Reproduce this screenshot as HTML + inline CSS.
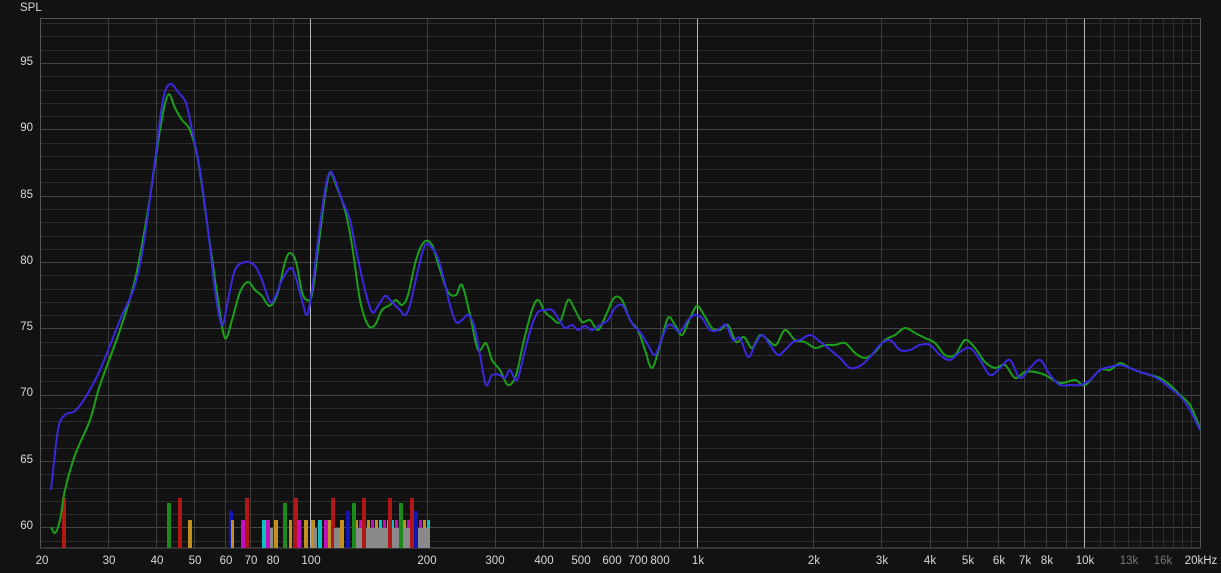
<!DOCTYPE html>
<html><head><meta charset="utf-8"><style>
html,body{margin:0;padding:0;background:#121212;}
body{width:1221px;height:573px;overflow:hidden;position:relative;font-family:"Liberation Sans",sans-serif;color:#d8d8d8;font-size:11.5px;}
.yl{position:absolute;right:1188px;text-align:right;width:30px;}
.xl{position:absolute;top:555px;transform:translateX(-50%);}
svg{position:absolute;left:0;top:0;}
</style></head><body>
<svg id="s" width="1221" height="573">
<g id="grid"></g>
<g id="bars"></g>
<path id="gp" fill="none" stroke="#19a019" stroke-width="2"/>
<path id="bp" fill="none" stroke="#3a28e0" stroke-width="2"/>
</svg>
<div style="position:absolute;left:20px;top:2px;">SPL</div>
<div class="yl" style="top:56px">95</div>
<div class="yl" style="top:122px">90</div>
<div class="yl" style="top:189px">85</div>
<div class="yl" style="top:255px">80</div>
<div class="yl" style="top:321px">75</div>
<div class="yl" style="top:387px">70</div>
<div class="yl" style="top:454px">65</div>
<div class="yl" style="top:520px">60</div>
<div class="xl" style="left:42px">20</div>
<div class="xl" style="left:109px">30</div>
<div class="xl" style="left:157px">40</div>
<div class="xl" style="left:195px">50</div>
<div class="xl" style="left:226px">60</div>
<div class="xl" style="left:251px">70</div>
<div class="xl" style="left:273px">80</div>
<div class="xl" style="left:311px">100</div>
<div class="xl" style="left:427px">200</div>
<div class="xl" style="left:495px">300</div>
<div class="xl" style="left:544px">400</div>
<div class="xl" style="left:581px">500</div>
<div class="xl" style="left:612px">600</div>
<div class="xl" style="left:638px">700</div>
<div class="xl" style="left:660px">800</div>
<div class="xl" style="left:698px">1k</div>
<div class="xl" style="left:814px">2k</div>
<div class="xl" style="left:882px">3k</div>
<div class="xl" style="left:930px">4k</div>
<div class="xl" style="left:968px">5k</div>
<div class="xl" style="left:999px">6k</div>
<div class="xl" style="left:1025px">7k</div>
<div class="xl" style="left:1047px">8k</div>
<div class="xl" style="left:1085px">10k</div>
<div class="xl" style="left:1129px;color:#777">13k</div>
<div class="xl" style="left:1163px;color:#777">16k</div>
<div class="xl" style="left:1201px">20kHz</div>
<script>
var NS="http://www.w3.org/2000/svg",L=40,R=1201,T=18,B=548;
function ln(g,x1,y1,x2,y2,c){var e=document.createElementNS(NS,"line");e.setAttribute("x1",x1);e.setAttribute("y1",y1);e.setAttribute("x2",x2);e.setAttribute("y2",y2);e.setAttribute("stroke",c);e.setAttribute("stroke-width",1);g.appendChild(e);}
var g=document.getElementById("grid");
function fx(f){return 40+386.7*Math.log10(f/20);}
for(var d=58;d<=98;d++){var y=Math.round(63+(95-d)*13.27)+0.5;if(y<T||y>B)continue;ln(g,L,y,R,y,d%5==0?"#444":"#2c2c2c");}
var fs=[];for(var f=20;f<=100;f+=10)fs.push(f);for(f=200;f<=1000;f+=100)fs.push(f);for(f=2000;f<=10000;f+=1000)fs.push(f);for(f=11000;f<=20000;f+=1000)fs.push(f);
fs.forEach(function(f){var x=Math.round(fx(f))+0.5;var c=(f==100||f==1000||f==10000)?"#b8b8b8":(f>10000?"#2e2e2e":"#3c3c3c");ln(g,x,T,x,B,c);});
var r=document.createElementNS(NS,"rect");r.setAttribute("x",40.5);r.setAttribute("y",18.5);r.setAttribute("width",1160);r.setAttribute("height",529.5);r.setAttribute("fill","none");r.setAttribute("stroke","#555");g.appendChild(r);
var bg=document.getElementById("bars");
function bar(x,w,top,c){var e=document.createElementNS(NS,"rect");e.setAttribute("x",x);e.setAttribute("y",top);e.setAttribute("width",w);e.setAttribute("height",B-top);e.setAttribute("fill",c);bg.appendChild(e);}
var RD="#b01818",GR="#1a8a1a",GD="#c09020",BL="#1414b0",MG="#c010c0",CY="#10c0c0",GY="#8a8a8a";
bar(355,73,528,GY);
var cols=[GD,MG,CY,GD,MG,GD,CY,MG,GD,CY,MG,GD];
for(var x=355,i=0;x<428;x+=4,i++){bar(x,3,520,cols[i%cols.length]);bar(x,3,528,GY);}
[[62,4,498,RD],[167,4,503,GR],[178,4,498,RD],[188,4,520,GD],[229,4,511,BL],[231,3,520,GD],[241,4,520,MG],[245,4,498,RD],[262,4,520,CY],[266,4,520,MG],[270,3,528,GY],[274,4,520,GD],[283,4,503,GR],[289,3,520,GD],[294,4,498,RD],[297,4,520,MG],[304,4,520,GD],[311,4,520,GD],[314,3,528,GY],[318,4,520,CY],[324,4,520,MG],[328,3,520,GD],[331,4,498,RD],[334,6,528,GY],[340,4,520,GD],[346,4,511,BL],[352,4,503,GR],[362,4,498,RD],[388,4,498,RD],[399,4,503,GR],[410,4,498,RD],[414,4,511,BL]].forEach(function(b){bar(b[0],b[1],b[2],b[3]);});
function smooth(s){var p=s.trim().split(/\s+/).map(function(t){return t.split(",").map(Number);});var d="M"+p[0][0]+","+p[0][1];for(var i=0;i<p.length-1;i++){var p0=p[i-1]||p[i],p1=p[i],p2=p[i+1],p3=p[i+2]||p2;var c1x=p1[0]+(p2[0]-p0[0])/6,c1y=p1[1]+(p2[1]-p0[1])/6,c2x=p2[0]-(p3[0]-p1[0])/6,c2y=p2[1]-(p3[1]-p1[1])/6;d+=" C"+c1x.toFixed(1)+","+c1y.toFixed(1)+" "+c2x.toFixed(1)+","+c2y.toFixed(1)+" "+p2[0]+","+p2[1];}return d;}
var G="51,527 55,533 60,520 65,490 75,455 90,420 100,385 120,330 135,280 148,210 160,130 168,95 175,108 182,120 190,130 198,160 208,230 218,300 225,338 232,320 240,292 248,282 255,290 262,296 270,306 278,292 285,262 290,253 296,262 302,292 307,300 312,295 318,250 325,195 330,173 336,185 345,210 352,245 360,300 368,325 375,325 382,310 390,305 396,300 402,305 408,295 416,260 424,242 432,245 440,270 448,292 456,295 462,285 470,315 478,350 486,343 492,360 500,370 508,385 516,375 524,340 532,310 538,300 545,312 552,318 560,322 568,300 575,310 582,322 590,320 598,330 606,315 614,298 622,300 630,320 638,330 645,350 652,368 660,345 668,318 675,325 682,335 690,318 697,306 704,315 712,328 720,330 728,325 736,342 744,337 752,348 760,335 768,340 776,345 785,330 795,340 805,342 815,348 825,345 835,345 845,343 855,353 865,358 875,352 885,340 895,335 905,328 915,333 925,338 935,343 945,355 955,355 965,340 975,348 985,362 995,368 1005,365 1015,378 1025,372 1035,372 1045,375 1060,383 1075,380 1085,385 1100,370 1110,370 1120,363 1130,368 1140,372 1150,375 1160,378 1170,385 1180,395 1190,405 1200,428";
var Bl="51,490 58,430 65,415 75,411 85,398 100,370 120,320 135,285 145,235 155,160 163,100 170,84 178,92 186,103 192,130 200,170 208,230 215,290 222,325 228,300 235,270 245,262 255,266 262,280 270,302 276,295 282,280 290,268 295,275 302,300 307,315 312,290 318,240 325,190 330,172 335,180 342,200 350,220 356,250 365,290 372,312 378,306 385,296 390,300 395,305 400,310 405,315 410,305 418,270 425,245 432,248 438,258 444,280 450,305 456,322 462,320 468,315 474,325 480,355 486,385 492,375 500,375 505,378 510,370 517,380 525,350 532,325 538,312 545,310 552,310 558,318 565,328 572,325 578,330 585,326 592,330 600,325 608,320 615,308 622,305 628,315 633,325 640,332 648,345 655,355 662,338 668,325 674,327 680,332 688,320 695,315 702,318 710,330 718,330 726,325 733,340 740,338 748,357 755,345 762,335 770,345 778,355 785,350 793,342 800,340 810,335 818,340 828,348 840,358 850,368 860,366 870,357 880,345 890,340 900,350 910,350 920,345 930,345 940,355 950,360 960,352 970,348 980,360 990,375 1000,368 1010,360 1020,378 1030,368 1040,360 1050,375 1060,385 1070,385 1080,385 1090,380 1100,370 1110,367 1120,365 1130,368 1140,372 1150,375 1160,380 1170,388 1180,396 1190,410 1200,430";
document.getElementById("gp").setAttribute("d",smooth(G));
document.getElementById("bp").setAttribute("d",smooth(Bl));
</script>
</body></html>
